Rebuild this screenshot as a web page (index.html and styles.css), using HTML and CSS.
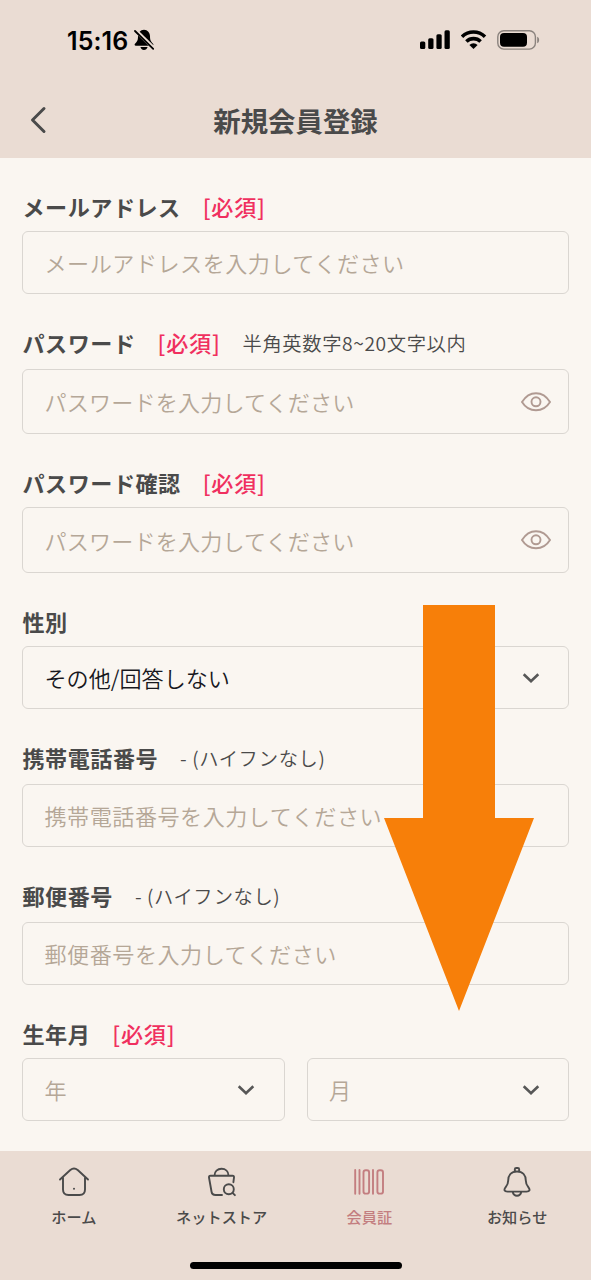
FILE: index.html
```html
<!DOCTYPE html>
<html lang="ja">
<head>
<meta charset="utf-8">
<title>新規会員登録</title>
<link rel="stylesheet" href="styles.css">
</head>
<body>
<div class="screen">
  <header class="header">
    <div class="status">
      <span class="clock">15:16</span>
      <svg class="mute" width="20" height="22" viewBox="0 0 20 22">
        <path d="M10 .8C6.400.8 4 4 4 7.300C4 11.500 3 12.800 1 14.700C.3 15.400.5 16.800 1.800 16.800H18.200C19.500 16.800 19.700 15.400 19 14.700C17 12.800 16 11.500 16 7.300C16 4 13.600.8 10 .8ZM6.400 18H13.600C13 20 11.700 21 10 21S7 20 6.400 18Z"/>
        <path d="M1.800 1.600L20 19.400" stroke="#eadcd3" stroke-width="3.800"/>
        <path d="M1 2L19.200 19.800" stroke="#000" stroke-width="1.800" stroke-linecap="round"/>
      </svg>
      <div class="signals">
        <svg width="31" height="20" viewBox="0 0 31 20">
          <rect x="0" y="11.500" width="5.300" height="7.500" rx="1.500"/><rect x="8.200" y="8.300" width="5.300" height="10.700" rx="1.500"/><rect x="16.400" y="4.300" width="5.300" height="14.700" rx="1.500"/><rect x="24.500" y=".3" width="5.300" height="18.700" rx="1.500"/>
        </svg>
        <svg width="26" height="20" viewBox="0 0 26 20">
          <path d="M1 6.700A16.600 16.600 0 0 1 24 6.700M5.400 11.500A10.200 10.200 0 0 1 19.600 11.500" fill="none" stroke="#000" stroke-width="3.600"/>
          <path d="M12.500 19L8.400 14.900A5.900 5.900 0 0 1 16.600 14.900Z"/>
        </svg>
        <svg width="43" height="20" viewBox="0 0 43 20">
          <rect x=".8" y=".8" width="37.600" height="18.300" rx="6" fill="none" stroke="#8b837e" stroke-width="1.400"/>
          <rect x="3" y="3" width="27" height="13.800" rx="4"/>
          <path d="M40.200 6.700C42.800 7.700 42.800 12.200 40.200 13.200Z" fill="#8b837e"/>
        </svg>
      </div>
    </div>
    <div class="titlebar">
      <svg class="back" width="18" height="28" viewBox="0 0 18 28"><path d="M15 2.500L3.500 14L15 25.500" fill="none" stroke="#4a4a4a" stroke-width="3" stroke-linecap="round" stroke-linejoin="round"/></svg>
      <h1 class="title">新規会員登録</h1>
    </div>
  </header>

  <main class="form">
    <section class="field">
      <div class="label"><b>メールアドレス</b><span class="required">[必須]</span></div>
      <div class="box">メールアドレスを入力してください</div>
    </section>
    <section class="field">
      <div class="label label-hint"><b>パスワード</b><span class="required">[必須]</span><span class="hint">半角英数字8~20文字以内</span></div>
      <div class="box box-password">パスワードを入力してください
        <svg class="eye" width="30" height="20" viewBox="0 0 30 20"><path d="M1 10C4.500 4.300 9.200 1.200 15 1.200S25.500 4.300 29 10C25.500 15.700 20.800 18.300 15 18.300S4.500 15.700 1 10Z"/><circle cx="15" cy="9.800" r="4.500"/></svg>
      </div>
    </section>
    <section class="field">
      <div class="label"><b>パスワード確認</b><span class="required">[必須]</span></div>
      <div class="box box-password box-confirm">パスワードを入力してください
        <svg class="eye" width="30" height="20" viewBox="0 0 30 20"><path d="M1 10C4.500 4.300 9.200 1.200 15 1.200S25.500 4.300 29 10C25.500 15.700 20.800 18.300 15 18.300S4.500 15.700 1 10Z"/><circle cx="15" cy="9.800" r="4.500"/></svg>
      </div>
    </section>
    <section class="field">
      <div class="label"><b>性別</b></div>
      <div class="box box-select box-filled">その他/回答しない
        <svg class="chevron" width="18" height="12" viewBox="0 0 18 12"><path d="M1.700 2.200L9 9.300L16.300 2.200"/></svg>
      </div>
    </section>
    <section class="field">
      <div class="label label-hint"><b>携帯電話番号</b><span class="hint">- (ハイフンなし)</span></div>
      <div class="box">携帯電話番号を入力してください</div>
    </section>
    <section class="field">
      <div class="label label-hint"><b>郵便番号</b><span class="hint">- (ハイフンなし)</span></div>
      <div class="box">郵便番号を入力してください</div>
    </section>
    <section class="field">
      <div class="label"><b>生年月</b><span class="required">[必須]</span></div>
      <div class="pair">
        <div class="box box-select">年<svg class="chevron" width="18" height="12" viewBox="0 0 18 12"><path d="M1.700 2.200L9 9.300L16.300 2.200"/></svg></div>
        <div class="box box-select">月<svg class="chevron" width="18" height="12" viewBox="0 0 18 12"><path d="M1.700 2.200L9 9.300L16.300 2.200"/></svg></div>
      </div>
    </section>
  </main>

  <footer class="footer">
    <nav class="tabs">
      <div class="tab">
        <svg width="34" height="34" viewBox="0 0 34 34"><path d="M3 14.500L13.300 5Q17 2 20.700 5L31 14.500M6 12.500V24.500Q6 30 11.500 30H22.500Q28 30 28 24.500V12.500"/><circle cx="17" cy="23.700" r="1" class="dot"/></svg>
        <span>ホーム</span>
      </div>
      <div class="tab">
        <svg width="34" height="34" viewBox="0 0 34 34"><path d="M9.500 10.500C9.500 6.500 12.500 3.800 16.500 3.800S23.500 6.500 23.500 10.500M17 30H10.500Q7 30 6.500 26.500L4 12.500Q3.800 10.700 5.500 10.700H27.500Q29.200 10.700 29 12.500L28.400 17.200M27.500 27.800L29.900 30.200"/><circle cx="23.800" cy="24.200" r="5"/></svg>
        <span>ネットストア</span>
      </div>
      <div class="tab tab-active">
        <svg width="34" height="34" viewBox="0 0 34 34"><path d="M3.200 5V28.800M7.500 5V28.800M21 5V28.800"/><rect x="11.500" y="5.200" width="5.600" height="23.400" rx="2.200"/><rect x="25.400" y="5.200" width="5.600" height="23.400" rx="2.200"/></svg>
        <span>会員証</span>
      </div>
      <div class="tab">
        <svg width="34" height="34" viewBox="0 0 34 34"><path d="M14.800 6.500V4.500Q14.800 3 16.300 3H17.700Q19.200 3 19.200 4.500V6.500M17 6.500C11 6.500 8.200 10.500 8.200 15.500C8.200 19 7.500 20 5.700 22.200C3.600 24.800 4.200 26.600 7.500 26.600H26.500C29.800 26.600 30.400 24.800 28.300 22.200C26.500 20 25.800 19 25.800 15.500C25.800 10.500 23 6.500 17 6.500ZM12.700 27C13.300 29.500 14.600 30.700 17 30.700S20.700 29.500 21.300 27"/></svg>
        <span>お知らせ</span>
      </div>
    </nav>
    <div class="home-bar"></div>
  </footer>

  <svg class="arrow" width="150" height="406" viewBox="0 0 150 406"><path d="M39 0H111V213H150L75 406L0 213H39Z" fill="#f77f09"/></svg>
</div>
</body>
</html>
```
FILE: styles.css
```css
* {
  box-sizing: border-box;
}

body {
  margin: 0;
  background: #faf6f1;
  color: #4a4a4a;
  font-family: "Noto Sans CJK JP", sans-serif;
}

.screen {
  position: relative;
  display: flex;
  flex-direction: column;
  width: 591px;
  height: 1280px;
  overflow: hidden;
}

.header {
  height: 158px;
  background: #eadcd3;
}

.status {
  display: flex;
  align-items: center;
  height: 80px;
  padding: 0 51px 0 67px;
}

.clock {
  width: 62px;
  padding-top: 1px;
  color: #000;
  font: 600 25px/30px Inter, sans-serif;
  letter-spacing: 0.1px;
  white-space: nowrap;
}

.mute {
  margin-left: 5px;
}

.signals {
  display: flex;
  gap: 10px;
  margin-left: auto;
}

.titlebar {
  display: grid;
  grid-template-columns: 60px 1fr 60px;
  align-items: center;
  height: 78px;
}

.back {
  margin: 1px 0 0 29px;
}

.title {
  margin: 2px 0 0;
  font-size: 27.4px;
  font-weight: 700;
  line-height: 40px;
  text-align: center;
}

.form {
  display: flex;
  flex: 1;
  flex-direction: column;
  gap: 25px;
  padding: 25px 22px 0;
}

.label {
  display: flex;
  align-items: center;
  gap: 22px;
  height: 48px;
  padding: 0 0 2px 0.5px;
  font-size: 22.1px;
  line-height: 32px;
  letter-spacing: 0.5px;
  white-space: nowrap;
}

.label-hint {
  height: 50px;
  padding-bottom: 4px;
}

.required {
  color: #f0305f;
  font-weight: 500;
  letter-spacing: 0.8px;
}

.hint {
  padding-top: 2px;
  font-size: 19.3px;
  font-weight: 350;
  letter-spacing: 0.6px;
}

.box {
  display: flex;
  align-items: center;
  justify-content: space-between;
  height: 63px;
  padding: 0 17px 2px 21.5px;
  border: 1px solid #dad6d1;
  border-radius: 6px;
  color: #b5a797;
  font-size: 22.1px;
  font-weight: 350;
  line-height: 32px;
  letter-spacing: 0.5px;
  white-space: nowrap;
}

.box-password {
  height: 65px;
  letter-spacing: 0.15px;
}

.box-confirm {
  height: 66px;
  padding-bottom: 0;
}

.box-select {
  padding-right: 28.5px;
  letter-spacing: 0;
}

.box-filled {
  color: #17171d;
}

.eye {
  margin-top: 2px;
  fill: none;
  stroke: #b09a92;
  stroke-width: 1.9;
}

.box-confirm .eye {
  margin-top: 0;
}

.chevron {
  margin-top: 2px;
  fill: none;
  stroke: #575757;
  stroke-width: 2.6;
}

.pair {
  display: grid;
  grid-template-columns: 1fr 1fr;
  gap: 22px;
}

.footer {
  display: flex;
  flex-direction: column;
  align-items: center;
  height: 129px;
  background: #eadcd3;
}

.tabs {
  display: grid;
  grid-template-columns: repeat(4, 1fr);
  width: 100%;
  height: 111px;
  padding-top: 14px;
}

.tab {
  display: flex;
  flex-direction: column;
  align-items: center;
  gap: 6px;
  font-size: 15.2px;
  font-weight: 500;
  line-height: 23px;
}

.tab svg {
  fill: none;
  stroke: #4a4a4a;
  stroke-width: 1.9;
  stroke-linecap: round;
  stroke-linejoin: round;
}

.tab .dot {
  fill: #4a4a4a;
  stroke: none;
}

.tab-active {
  color: #c37e80;
}

.tab-active svg {
  stroke: #c37e80;
}

.home-bar {
  width: 212px;
  height: 7px;
  border-radius: 4px;
  background: #000;
}

.arrow {
  position: absolute;
  top: 605px;
  left: 384px;
}
```
